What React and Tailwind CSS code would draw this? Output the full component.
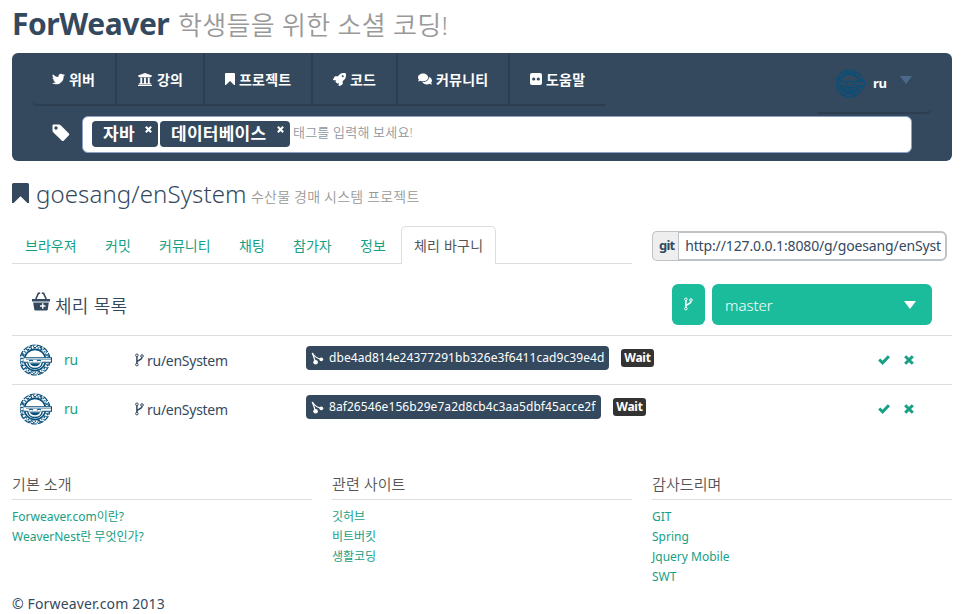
import React from "react";
import { FaTwitter, FaUniversity, FaRocket, FaComments } from "react-icons/fa";

const Bookmark = ({ className }) => (
  <svg viewBox="0 0 17 20" preserveAspectRatio="none" className={className} fill="currentColor">
    <path d="M1.5 0h14q1.5 0 1.5 1.5V20h-1.6L8.5 13.3 1.6 20H0V1.5Q0 0 1.5 0z" />
  </svg>
);

const Flickr = ({ className }) => (
  <svg viewBox="0 0 12 12" className={className}>
    <rect width="12" height="12" rx="2" fill="currentColor" />
    <circle cx="3.7" cy="6" r="1.6" fill="#34495e" />
    <circle cx="8.3" cy="6" r="1.6" fill="#34495e" />
  </svg>
);

const Tag = ({ className }) => (
  <svg viewBox="0 0 18 18" className={className} fill="currentColor">
    <path
      fillRule="evenodd"
      d="M1.5.5h5.2q1.2 0 2 .8l8.2 8.2q.9.9 0 1.8l-5.2 5.4q-.9.8-1.8 0L1.4 8.5Q.5 7.7.5 6.6V1.5q0-1 1-1zM4 2.3A1.7 1.7 0 1 0 4 5.7A1.7 1.7 0 1 0 4 2.3z"
    />
  </svg>
);

const Fork = ({ className }) => (
  <svg viewBox="0 0 9 14" className={className} fill="none" stroke="currentColor" strokeWidth="1">
    <circle cx="1.9" cy="2.3" r="1.3" />
    <circle cx="1.9" cy="11.6" r="1.3" />
    <circle cx="7" cy="3" r="1.3" />
    <path strokeWidth="1.5" d="M1.9 3.5v7M7 4.2c0 3.1-4.2 2.3-5 4.8" />
  </svg>
);

const Basket = ({ className }) => (
  <svg viewBox="0 0 18 19" className={className}>
    <path d="M3.8 7 6.600.8M14.200 7 11.400.8M6.200 1.300H8.200M9.800 1.300h2" fill="none" stroke="currentColor" strokeWidth="1.600" />
    <path d="M0 7h18v2.500H0z" fill="currentColor" />
    <path d="M1.200 10.500h15.600l-1 6.800q-.2 1.200-1.300 1.200h-11q-1.100 0-1.300-1.200z" fill="currentColor" />
    <path d="M8 14h5.500M10.750 11.300v5.400" stroke="#fff" strokeWidth="1.400" />
  </svg>
);

const Merge = ({ className }) => (
  <svg viewBox="0 0 13 13" className={className} fill="currentColor" stroke="currentColor">
    <path d="M1.5 1.5 4.5 10M1.5 1.5Q5 6.500 10 7" fill="none" strokeWidth="1.200" />
    <circle cx="1.5" cy="1.5" r=".8" stroke="none" />
    <circle cx="4.6" cy="10.3" r="2.300" stroke="none" />
    <circle cx="10.300" cy="7.300" r="1.900" stroke="none" />
  </svg>
);

const Check = () => (
  <svg viewBox="0 0 12 10" className="h-[10px] w-3" fill="none" stroke="currentColor" strokeWidth="3">
    <path d="M1.2 4.5 4.6 7.8 10.9 1.3" />
  </svg>
);

const Cross = ({ className }) => (
  <svg viewBox="0 0 10 10" className={className} fill="none" stroke="currentColor" strokeWidth="3">
    <path d="M1.2 1.2 8.8 8.8M8.8 1.2 1.2 8.8" />
  </svg>
);

const Avatar = ({ className, paper }) => (
  <svg viewBox="0 0 32 32" className={className} fill="none" stroke="#064f7b">
    <circle cx="15" cy="16" r="15" strokeWidth="1.2" strokeDasharray="6 1.2" />
    <circle cx="15" cy="16" r="13.7" strokeWidth="1.2" strokeDasharray="1.5 1.9 3 1.3 1 2.2" />
    <circle cx="15" cy="16" r="12.3" strokeWidth="1.3" strokeDasharray="2.600 1.700 1.200 1.500" />
    <circle cx="15" cy="16" r="10.600" strokeWidth="1.700" />
    <path d="M7.600 18q.8 6.500 7.400 6.500t7.400-6.500z" fill={paper} strokeWidth="1.400" />
    <path d="M9.800 19.300h10.400q-1.500 3-5.200 3t-5.200-3z" fill="#064f7b" stroke="none" />
    <path d="M3.500 13.500H32v5H4z" fill={paper} stroke="none" />
    <path d="M3.5 13.7H32M31.500 13.7v4.500M32 18.300H22M4 18.300H8M9 17q2-1.600 4 0M17 17q2-1.600 4 0" strokeWidth="1.100" />
    <path d="M6 15.400h26" strokeWidth=".5" />
  </svg>
);

const menu = [
  { label: "위버", icon: <FaTwitter className="h-[14px] w-[13px]" />, box: "w-[85px]" },
  { label: "강의", icon: <FaUniversity className="h-[15px] w-[16px]" />, box: "w-[88px]" },
  { label: "프로젝트", icon: <Bookmark className="h-[12px] w-[10px]" />, box: "w-[108px]" },
  { label: "코드", icon: <FaRocket className="h-[13px] w-[13px]" />, box: "w-[85px]" },
  { label: "커뮤니티", icon: <FaComments className="h-[14px] w-[14px]" />, box: "w-[112px]" },
  { label: "도움말", icon: <Flickr className="h-[12px] w-[12px]" />, box: "w-[95px]" },
];

const tabs = [
  ["브라우져", "w-[80px]"],
  ["커밋", "w-[54px]"],
  ["커뮤니티", "w-[80px]"],
  ["채팅", "w-[54px]"],
  ["참가자", "w-[67px]"],
  ["정보", "w-[54px]"],
];

const commits = [
  ["dbe4ad814e24377291bb326e3f6411cad9c39e4d", "w-[303px]"],
  ["8af26546e156b29e7a2d8cb4c3aa5dbf45acce2f", "w-[295px]"],
];

const footer = [
  ["기본 소개", ["Forweaver.com이란?", "WeaverNest란 무엇인가?"]],
  ["관련 사이트", ["깃허브", "비트버킷", "생활코딩"]],
  ["감사드리며", ["GIT", "Spring", "Jquery Mobile", "SWT"]],
];

function Chip({ label, box }) {
  return (
    <span className={`flex h-[26px] justify-between rounded-[4px] bg-[#34495e] pl-[11px] pr-[6px] text-white ${box}`}>
      <b className="text-[17px] leading-[26px] tracking-[0.25px]">{label}</b>
      <Cross className="mt-[5px] h-[7px] w-[7px]" />
    </span>
  );
}

export default function App() {
  return (
    <div className="h-[614px] w-[965px] overflow-hidden whitespace-nowrap bg-white pl-3 font-['Noto_Sans','Noto_Sans_CJK_KR',sans-serif] text-[14px] text-[#34495e]">
      <div className="w-[940px]">
        <h1 className="flex h-[53px] items-baseline leading-[48px]">
          <span className="w-[166px] text-[30px] font-bold tracking-[-0.45px]">ForWeaver</span>
          <span className="text-[26px] font-[350] tracking-[0.3px] text-[#999]">학생들을 위한 소셜 코딩!</span>
        </h1>

        <nav className="h-[108px] rounded-[6px] bg-[#34495e] px-5 text-white">
          <div className="flex h-[63px] items-start justify-between">
            <ul className="flex h-[53px] rounded-bl-[6px] border-b-2 border-[#2c3e50] text-[14px] font-bold tracking-[0.2px]">
              {menu.map((m, i) => (
                <li
                  key={m.label}
                  className={`flex items-center gap-1 border-[#2c3e50] pl-5 pt-px ${i < 5 ? "border-r-2" : ""} ${m.box}`}
                >
                  {m.icon}
                  <span>{m.label}</span>
                </li>
              ))}
            </ul>
            <div className="flex h-[61px] w-[115px] rounded-br-[6px] border-b-2 border-[#2c3e50] pl-[19px]">
              <Avatar className="mt-4 h-[29px] w-[29px]" paper="#34495e" />
              <b className="ml-2 mt-5 text-[13px] leading-[20px] tracking-[-0.4px]">ru</b>
              <i className="ml-[14px] mt-[23px] h-0 w-0 border-x-[6px] border-t-[8px] border-x-transparent border-t-[#4b6a8b]" />
            </div>
          </div>
          <div className="flex">
            <Tag className="ml-[20px] mt-[8px] h-[18px] w-[18px]" />
            <div className="ml-[12px] flex h-[37px] w-[830px] gap-[2px] rounded-[6px] border border-[#8f9fc4] bg-white pl-[9px] pt-1">
              <Chip label="자바" box="w-[66px]" />
              <Chip label="데이터베이스" box="w-[130px]" />
              <span className="ml-[1px] text-[13px] font-[350] leading-[23px] tracking-[0.2px] text-[#8e979f]">
                태그를 입력해 보세요!
              </span>
            </div>
          </div>
        </nav>

        <h2 className="mt-[16px] flex h-[49px] items-baseline leading-[34px]">
          <Bookmark className="mt-[6px] h-[20px] w-[17px] self-start" />
          <span className="ml-[7px] w-[215px] text-[24px] font-[350] tracking-[0.1px]">goesang/enSystem</span>
          <span className="relative -top-px text-[14px] font-[350] tracking-[0.2px] text-[#999]">
            수산물 경매 시스템 프로젝트
          </span>
        </h2>

        <div className="flex h-[38px] justify-between">
          <div className="flex w-[620px] border-b border-[#ddd] text-[14px] leading-[37px] text-[#16a085]">
            {tabs.map(([t, w]) => (
              <span key={t} className={`pl-[13px] pt-px ${w}`}>
                {t}
              </span>
            ))}
            <span className="h-[38px] w-[95px] rounded-t-[5px] border border-b-0 border-[#ddd] bg-white pl-[12px] tracking-[0.2px] text-[#555]">
              체리 바구니
            </span>
          </div>
          <div className="mr-[5px] mt-[5px] flex h-[30px] w-[295px]">
            <b className="w-[27px] rounded-l-[5px] border border-r-0 border-[#bdc3c7] bg-[#eee] pl-[6px] text-[13px] leading-[26px] tracking-[-0.8px]">
              git
            </b>
            <span className="flex-1 rounded-r-[6px] border-2 border-l border-[#bdc3c7] pl-[6px] pr-1">
              <span className="block overflow-hidden text-[14px] leading-[26px] tracking-[-0.13px]">
                http://127.0.0.1:8080/g/goesang/enSyst
              </span>
            </span>
          </div>
        </div>

        <div className="flex h-[72px] items-start justify-between border-b border-[#ddd] pl-[20px] pr-[20px] pt-[20px]">
          <div className="flex">
            <Basket className="mt-[8px] h-[19px] w-[18px]" />
            <span className="ml-[5px] mt-[7px] text-[18px] font-[350] leading-[30px] tracking-[0.3px]">체리 목록</span>
          </div>
          <div className="flex gap-[7px] text-white">
            <span className="flex h-[41px] w-[33px] justify-center rounded-[6px] bg-[#1abc9c] pt-[13px]">
              <Fork className="h-[14px] w-[9px]" />
            </span>
            <span className="flex h-[41px] w-[220px] justify-between rounded-[6px] bg-[#1abc9c] pl-[13px] pr-[16px] text-[15px] font-light leading-[43px]">
              master
              <i className="mt-[17px] h-0 w-0 border-x-[6px] border-t-[8px] border-x-transparent border-t-white" />
            </span>
          </div>
        </div>

        {commits.map(([hash, w], i) => (
          <div key={hash} className={`flex items-start pl-2 ${i ? "h-[80px]" : "h-[49px] border-b border-[#ddd]"}`}>
            <Avatar className="mt-2 h-8 w-8" paper="#fff" />
            <span className="ml-[12px] mt-[14px] w-[71px] leading-[20px] tracking-[-0.4px] text-[#16a085]">ru</span>
            <Fork className="mt-[17px] h-[14px] w-[9px]" />
            <span className="ml-[3px] mt-[15px] w-[159px] leading-[20px] tracking-[-0.27px]">ru/enSystem</span>
            <span
              className={`mt-[10px] flex h-6 rounded-[4px] bg-[#34495e] pl-[5px] text-[12px] leading-6 tracking-[0.07px] text-white ${w}`}
            >
              <Merge className="mr-[5px] mt-[6px] h-[13px] w-[13px]" />
              {hash}
            </span>
            <b className="ml-[12px] mt-[13px] h-[18px] w-[33px] rounded-[3px] bg-[#333] text-center text-[12px] leading-[18px] tracking-[-0.2px] text-white">
              Wait
            </b>
            <span className="ml-auto mr-[38px] mt-[19px] flex gap-[14px] text-[#16a085]">
              <Check />
              <Cross className="h-[10px] w-[10px]" />
            </span>
          </div>
        ))}

        <footer className="mt-[9px]">
          <div className="flex h-[120px] gap-5">
            {footer.map(([title, links]) => (
              <section key={title} className="w-[300px]">
                <h3 className="h-[26px] border-b border-[#ddd] text-[15px] font-[350] leading-[20px] tracking-[0.1px] text-[#555]">
                  {title}
                </h3>
                <ul className="pt-[7px] text-[12px] leading-[20px] text-[#16a085]">
                  {links.map((l) => (
                    <li key={l}>{l}</li>
                  ))}
                </ul>
              </section>
            ))}
          </div>
          <p className="text-[14px] leading-[20px] tracking-[0.15px]">© Forweaver.com 2013</p>
        </footer>
      </div>
    </div>
  );
}
